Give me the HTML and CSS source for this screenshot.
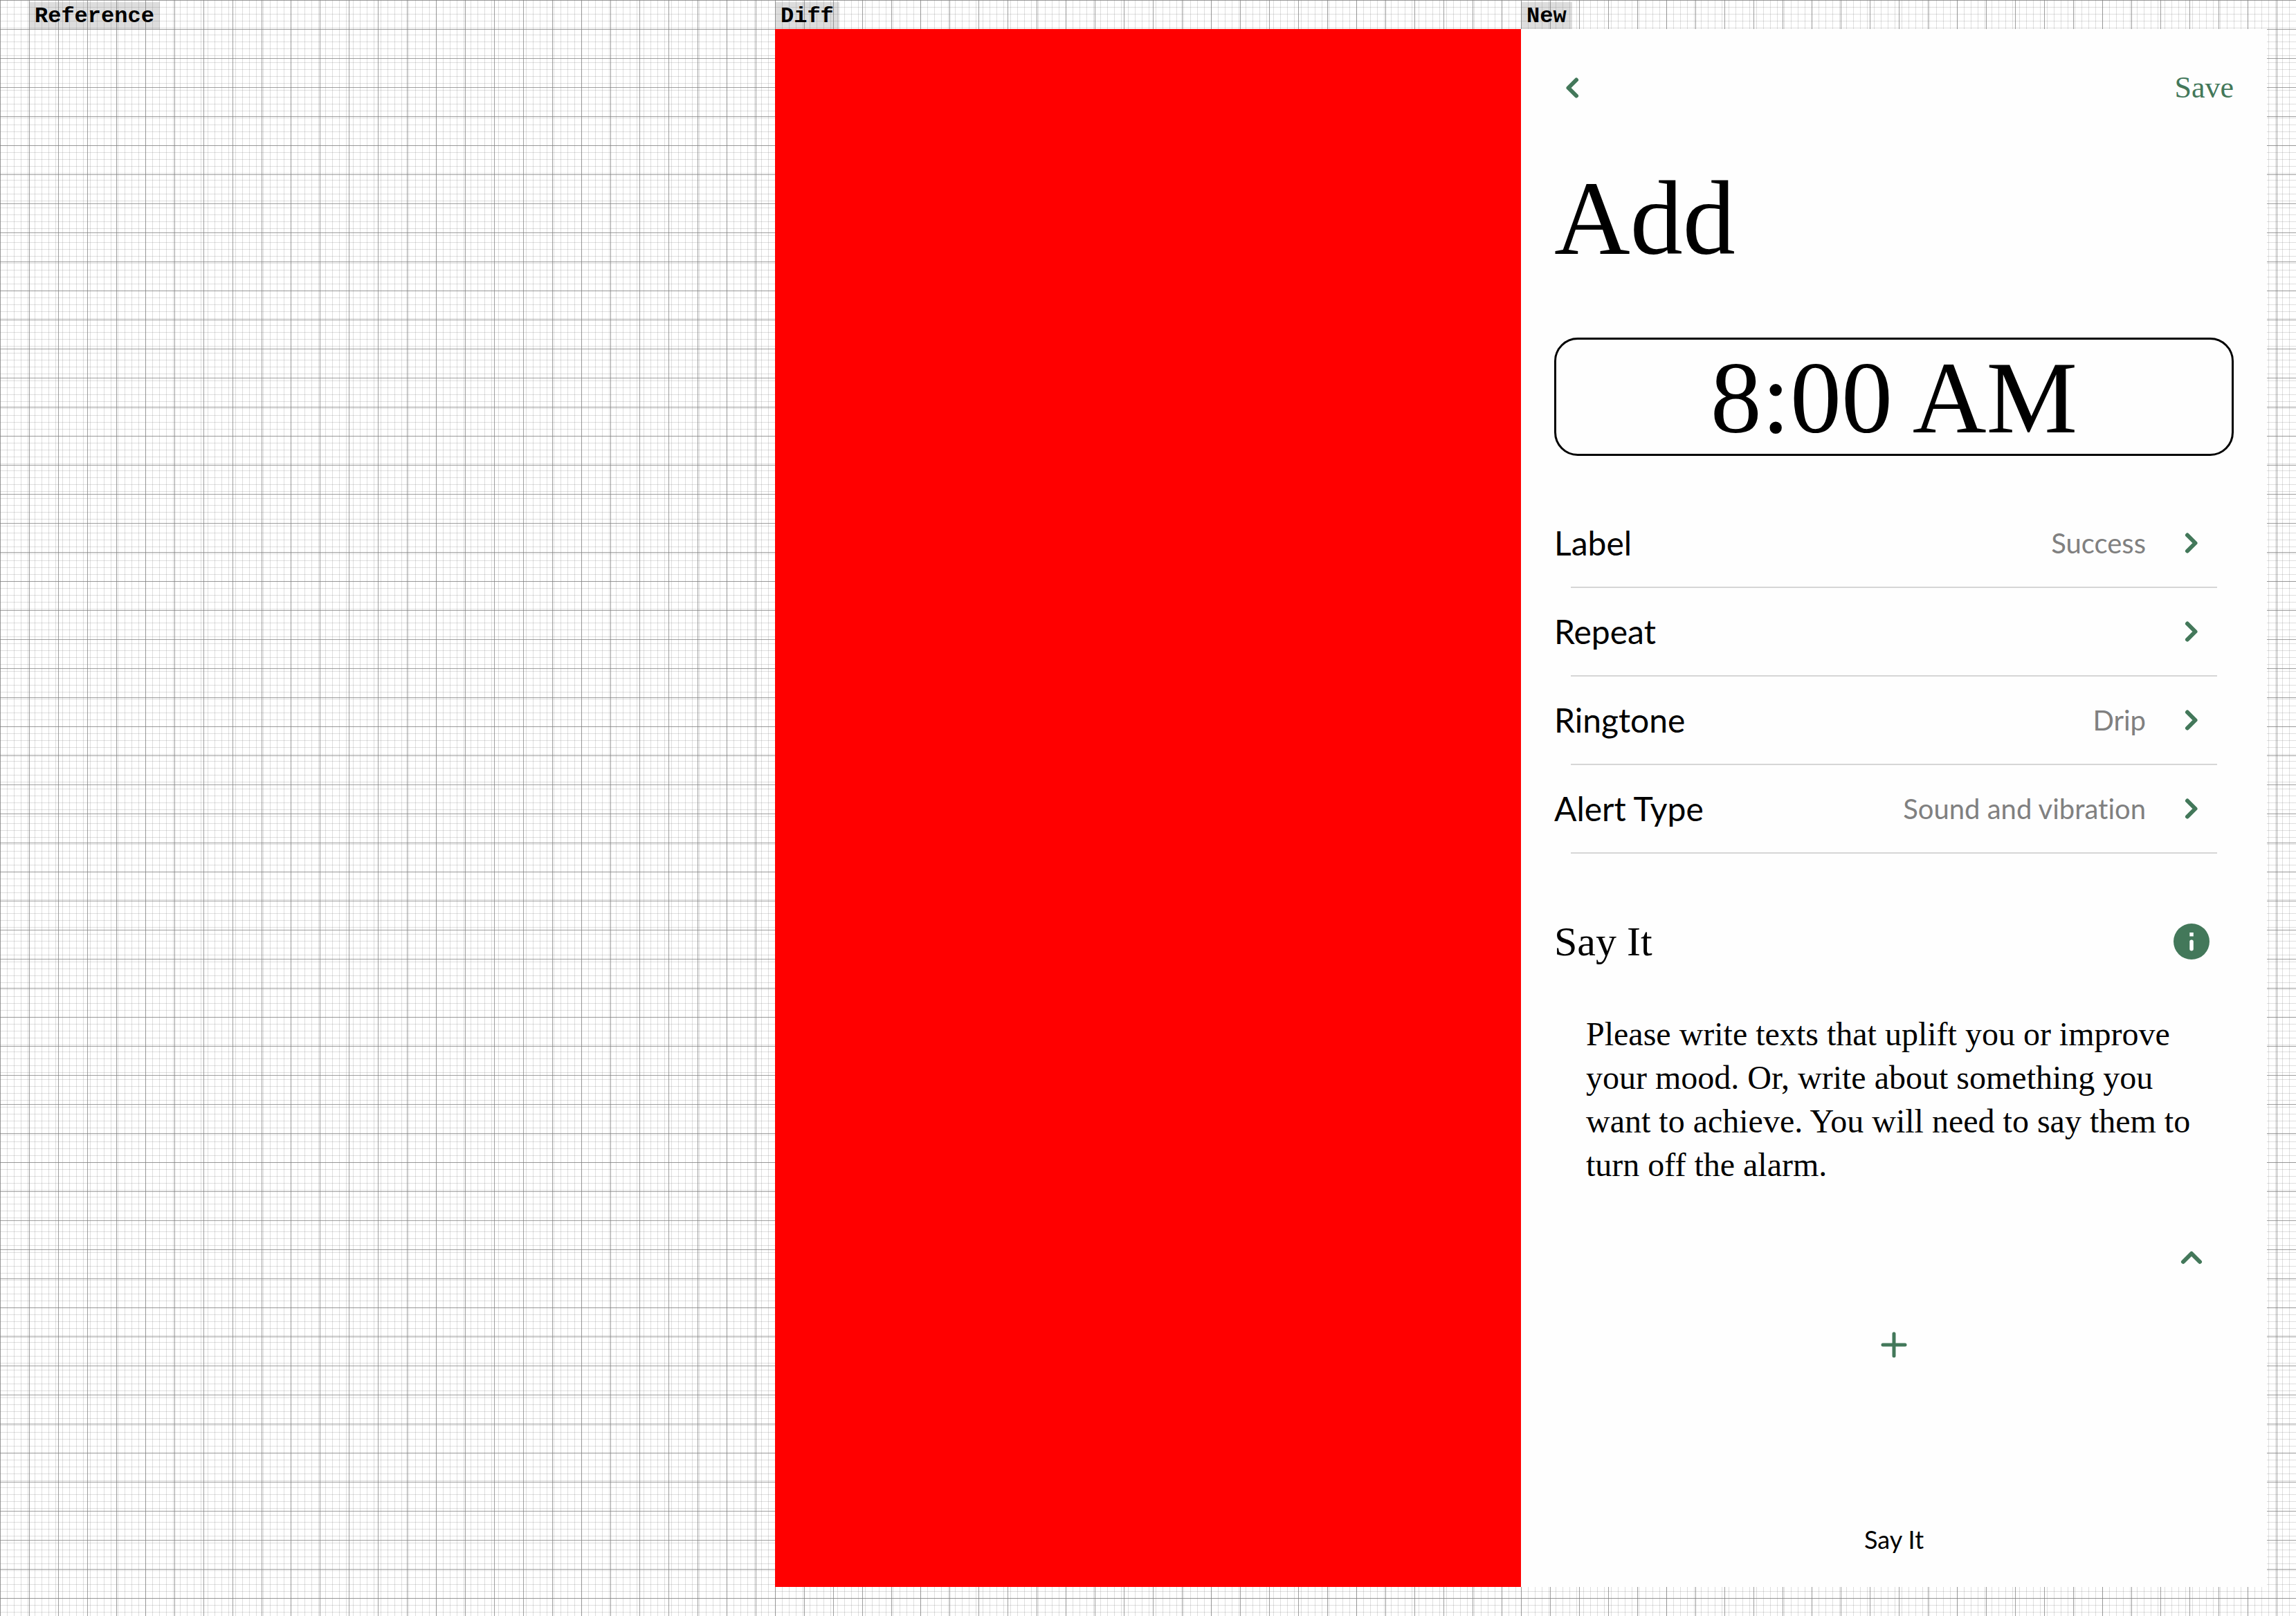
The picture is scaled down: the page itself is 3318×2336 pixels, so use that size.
FILE: index.html
```html
<!DOCTYPE html>
<html lang="en">
<head>
  <meta charset="utf-8">
  <meta name="viewport" content="width=device-width, initial-scale=1">
  <title>Add alarm</title>
  <link rel="stylesheet" href="styles.css">
</head>
<body>
  <main class="comparison">
    <section class="pane pane-first">
      <h2 class="tag">Reference</h2>
    </section>
    <section class="pane">
      <h2 class="tag">Diff</h2>
      <div class="diff"></div>
    </section>
    <section class="pane pane-last">
      <h2 class="tag">New</h2>
      <div class="app">
        <header class="topbar">
          <button class="plain" type="button" aria-label="Back">
            <svg class="icon" viewBox="0 0 52 52"><path class="stroke" d="M32 14.500 20.500 26 32 37.500"/></svg>
          </button>
          <button class="plain save" type="button">Save</button>
        </header>
        <h1 class="title">Add</h1>
        <button class="time" type="button">8:00 AM</button>
        <ul class="settings">
          <li><button class="plain setting" type="button"><span>Label</span><span class="value">Success</span><svg class="icon" viewBox="0 0 52 52"><path class="stroke" d="M20 14.500 31.500 26 20 37.500"/></svg></button></li>
          <li><button class="plain setting" type="button"><span>Repeat</span><span class="value"></span><svg class="icon" viewBox="0 0 52 52"><path class="stroke" d="M20 14.500 31.500 26 20 37.500"/></svg></button></li>
          <li><button class="plain setting" type="button"><span>Ringtone</span><span class="value">Drip</span><svg class="icon" viewBox="0 0 52 52"><path class="stroke" d="M20 14.500 31.500 26 20 37.500"/></svg></button></li>
          <li><button class="plain setting" type="button"><span>Alert Type</span><span class="value">Sound and vibration</span><svg class="icon" viewBox="0 0 52 52"><path class="stroke" d="M20 14.500 31.500 26 20 37.500"/></svg></button></li>
        </ul>
        <div class="section-head">
          <h2 class="section-title">Say It</h2>
          <button class="plain" type="button" aria-label="About Say It">
            <svg class="icon" viewBox="0 0 52 52"><circle cx="26" cy="26" r="26" fill="#43785a"/><path fill="#fff" d="M23.300 13h5.500v5.500h-5.500z"/><rect x="23.300" y="23.500" width="5.500" height="16" rx="2.700" fill="#fff"/></svg>
          </button>
        </div>
        <p class="hint">Please write texts that uplift you or improve your mood. Or, write about something you want to achieve. You will need to say them to turn off the alarm.</p>
        <div class="collapse">
          <button class="plain" type="button" aria-label="Collapse">
            <svg class="icon" viewBox="0 0 52 52"><path class="stroke" d="M14 32 26 20 38 32"/></svg>
          </button>
        </div>
        <div class="add">
          <button class="plain" type="button" aria-label="Add text">
            <svg class="icon" viewBox="0 0 52 52"><path class="stroke thin" d="M26 10v32M10 26h32"/></svg>
          </button>
        </div>
        <footer class="bottombar"><button class="plain tab" type="button">Say It</button></footer>
      </div>
    </section>
  </main>
</body>
</html>
```
FILE: styles.css
```css
:root {
  --green: #43785a;
  --cell: 42px;
  --minor: rgba(128, 128, 128, 0.25);
  --major: rgba(128, 128, 128, 0.75);
  --serif: "Liberation Serif", serif;
  --sans: Lato, sans-serif;
}

body {
  margin: 0;
  background: #fff;
  color: #000;
}

.comparison {
  display: flex;
  min-height: 100vh;
}

/* Panes share the width equally; the outer ones add the margin. */
.pane {
  flex: 1 1 0;
  display: flex;
  flex-direction: column;
  align-items: flex-start;
  padding-bottom: var(--cell);
  background-image:
    linear-gradient(to right, var(--major) 1px, transparent 1px),
    linear-gradient(to bottom, var(--major) 1px, transparent 1px),
    linear-gradient(to right, var(--minor) 1px, transparent 1px),
    linear-gradient(to bottom, var(--minor) 1px, transparent 1px);
  background-size:
    var(--cell) var(--cell),
    var(--cell) var(--cell),
    10px 10px,
    10px 10px;
}

.pane-first {
  padding-left: var(--cell);
}

.pane-last {
  padding-right: var(--cell);
}

.tag {
  margin: 3px 0 0;
  padding: 2px 8px 0;
  background: rgba(128, 128, 128, 0.27);
  font: bold 32px/37px "Liberation Mono", monospace;
}

.diff {
  flex: 1;
  align-self: stretch;
  background: #f00;
}

.app {
  flex: 1;
  align-self: stretch;
  display: flex;
  flex-direction: column;
  padding: 0 48px;
  background: #fefefe;
  font-family: var(--sans);
}

.plain {
  display: flex;
  align-items: center;
  margin: 0;
  padding: 0;
  border: 0;
  background: none;
  color: inherit;
  cursor: pointer;
}

.icon {
  display: block;
  flex: none;
  width: 52px;
  height: 52px;
}

.stroke {
  fill: none;
  stroke: var(--green);
  stroke-width: 6;
  stroke-linecap: round;
  stroke-linejoin: round;
}

.thin {
  stroke-width: 5;
}

.topbar {
  display: flex;
  align-items: center;
  justify-content: space-between;
  height: 170px;
}

.save {
  color: var(--green);
  font: 44px/48px var(--serif);
}

.title {
  margin: 24px 0 92px;
  font: 152px/160px var(--serif);
}

.time {
  margin: 0;
  padding: 4px 0 1px;
  border: 3px solid #000;
  border-radius: 34px;
  background: none;
  color: inherit;
  font: 148px/160px var(--serif);
}

.settings {
  margin: 63px 0 64px;
  padding: 0;
  list-style: none;
}

.settings li::after {
  content: "";
  display: block;
  height: 2px;
  margin: 0 24px;
  background: #d6d6d6;
}

.setting {
  width: 100%;
  height: 126px;
  padding-right: 35px;
  font: 48px/52px var(--sans);
  font-variant-ligatures: none;
}

.value {
  flex: 1;
  margin-right: 40px;
  color: #808080;
  font-size: 40px;
  text-align: right;
}

.section-head {
  display: flex;
  align-items: center;
  justify-content: space-between;
  height: 126px;
  padding-right: 35px;
}

.section-title {
  margin: 0;
  font: 60px/64px var(--serif);
}

.hint {
  margin: 39px 60px 0 46px;
  font: 48px/63px var(--serif);
}

.collapse {
  display: flex;
  justify-content: flex-end;
  margin-top: 77px;
  padding-right: 35px;
}

.add {
  display: flex;
  justify-content: center;
  margin-top: 74px;
}

.bottombar {
  display: flex;
  justify-content: center;
  height: 138px;
  margin-top: auto;
}

.tab {
  font: 36px/40px var(--sans);
}
```
